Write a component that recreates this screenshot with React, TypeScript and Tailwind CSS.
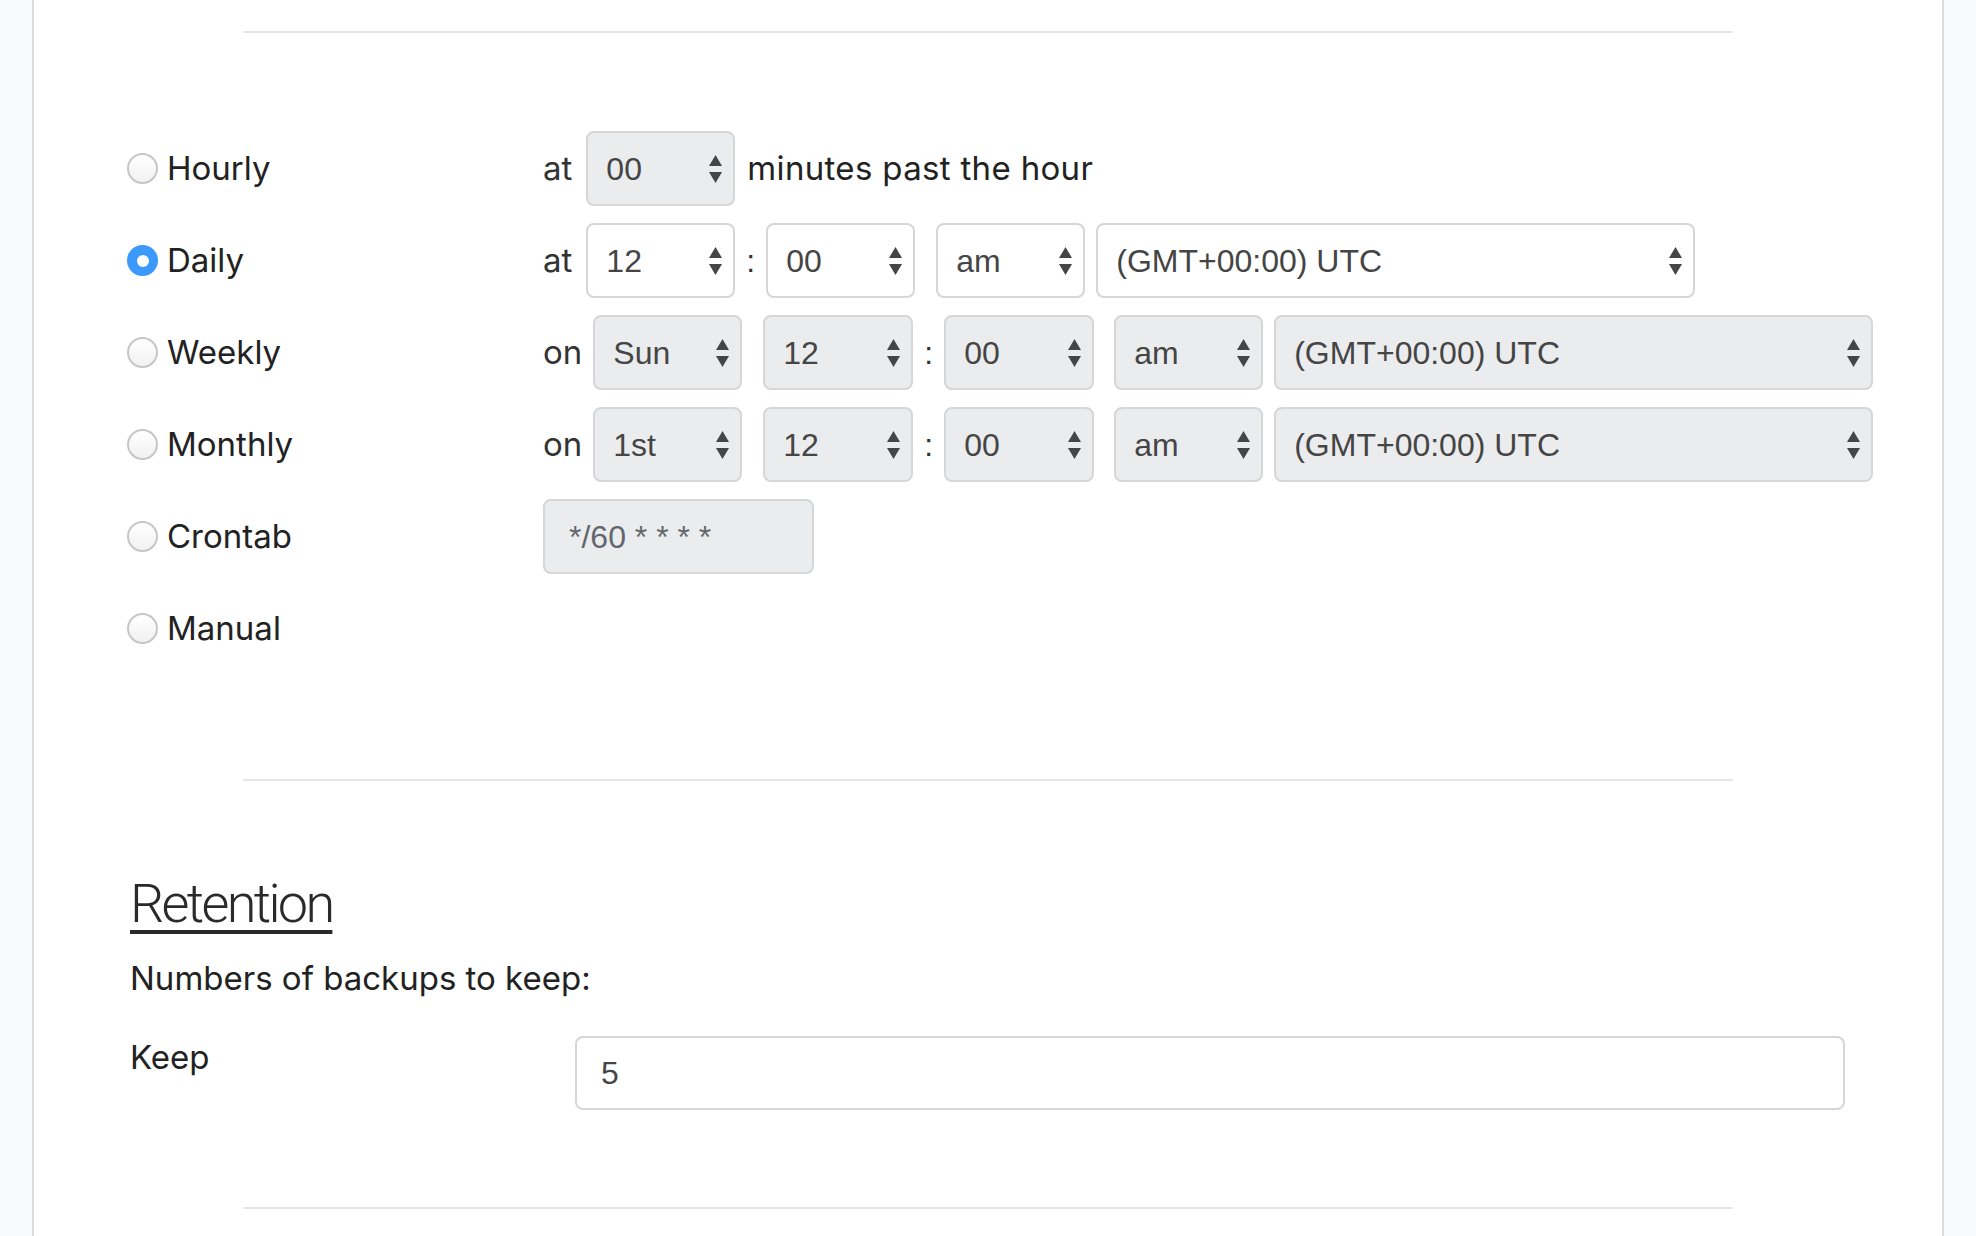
import React from "react";

const Arrow = () => (
  <svg width="13" height="28" viewBox="0 0 13 28" className="shrink-0">
    <polygon points="6.5,0 13,11 0,11" fill="#454545" />
    <polygon points="0,17 13,17 6.5,28" fill="#454545" />
  </svg>
);

type SelProps = { value: string; w: string; disabled?: boolean; className?: string };

const Sel = ({ value, w, disabled, className = "" }: SelProps) => (
  <div
    className={`${w} ${className} h-[75px] shrink-0 flex items-center justify-between pl-[18px] pr-[11px] rounded-[8px] border-2 border-[#d6d6d6] ${
      disabled ? "bg-[#ebecee]" : "bg-white"
    } font-['Liberation_Sans',Arial,sans-serif] text-[32px] text-[#454545]`}
  >
    <span>{value}</span>
    <Arrow />
  </div>
);

const Colon = () => (
  <span className="mx-[11px] font-['Liberation_Sans',Arial,sans-serif] text-[32px] text-[#333]">:</span>
);

const Radio = ({ checked }: { checked?: boolean }) =>
  checked ? (
    <div className="w-[31px] h-[31px] rounded-full bg-[#3b99fc] flex items-center justify-center shrink-0">
      <div className="w-[12px] h-[12px] rounded-full bg-white" />
    </div>
  ) : (
    <div className="w-[31px] h-[31px] rounded-full border-2 border-[#c6c6c6] bg-linear-to-b from-white to-[#f1f1f1] shrink-0" />
  );

const Row = ({
  label,
  checked,
  children,
}: {
  label: string;
  checked?: boolean;
  children?: React.ReactNode;
}) => (
  <div className="flex items-center h-[75px]">
    <div className="w-[416px] flex items-center gap-[9px] shrink-0">
      <Radio checked={checked} />
      <span className="text-[#222]">{label}</span>
    </div>
    <div className="flex items-center">{children}</div>
  </div>
);

const Hr = () => <div className="mx-auto w-[1490px] h-[2px] bg-[#e6e6e6]" />;

export default function App() {
  return (
    <div className="w-[1976px] h-[1236px] overflow-hidden bg-[#f8f9fb]">
      <div className="ml-[32px] w-[1912px] h-[1236px] border-x-2 border-[#dcdcdc] bg-white font-['Inter',sans-serif] text-[33px] text-[#222]">
        <div className="pt-[31px]">
          <Hr />
        </div>

        <div className="pl-[93px] pt-[98px] flex flex-col gap-[17px]">
          <Row label="Hourly">
            <span className="text-[#333]">at</span>
            <Sel value="00" w="w-[149px]" disabled className="ml-[14px]" />
            <span className="ml-[12px] text-[#222] tracking-[0.01em]">minutes past the hour</span>
          </Row>
          <Row label="Daily" checked>
            <span className="text-[#333]">at</span>
            <Sel value="12" w="w-[149px]" className="ml-[14px]" />
            <Colon />
            <Sel value="00" w="w-[149px]" />
            <Sel value="am" w="w-[149px]" className="ml-[21px]" />
            <Sel value="(GMT+00:00) UTC" w="w-[599px]" className="ml-[11px]" />
          </Row>
          <Row label="Weekly">
            <span className="text-[#333]">on</span>
            <Sel value="Sun" w="w-[149px]" disabled className="ml-[11px]" />
            <Sel value="12" w="w-[150px]" disabled className="ml-[21px]" />
            <Colon />
            <Sel value="00" w="w-[150px]" disabled />
            <Sel value="am" w="w-[149px]" disabled className="ml-[20px]" />
            <Sel value="(GMT+00:00) UTC" w="w-[599px]" disabled className="ml-[11px]" />
          </Row>
          <Row label="Monthly">
            <span className="text-[#333]">on</span>
            <Sel value="1st" w="w-[149px]" disabled className="ml-[11px]" />
            <Sel value="12" w="w-[150px]" disabled className="ml-[21px]" />
            <Colon />
            <Sel value="00" w="w-[150px]" disabled />
            <Sel value="am" w="w-[149px]" disabled className="ml-[20px]" />
            <Sel value="(GMT+00:00) UTC" w="w-[599px]" disabled className="ml-[11px]" />
          </Row>
          <Row label="Crontab">
            <div className="w-[271px] h-[75px] flex items-center pl-[24px] rounded-[8px] border-2 border-[#d6d6d6] bg-[#ebecee] font-['Liberation_Sans',Arial,sans-serif] text-[32px] text-[#62676d]">
              */60 * * * *
            </div>
          </Row>
          <Row label="Manual" />
        </div>

        <div className="pt-[113px]">
          <Hr />
        </div>

        <div className="pl-[96px] pt-[96px]">
          <h2 className="font-['Roboto',sans-serif] font-light text-[54px] leading-[54px] text-[#2a2a2a] underline decoration-[4px] underline-offset-[8px] tracking-[-0.05em]">
            Retention
          </h2>
          <p className="mt-[27px] leading-[40px] text-[#222]">Numbers of backups to keep:</p>
          <div className="mt-[38px] flex items-start">
            <span className="w-[445px] shrink-0 leading-[42px] text-[#222]">Keep</span>
            <div className="w-[1270px] h-[74px] flex items-center pl-[24px] rounded-[8px] border-2 border-[#d6d6d6] bg-white font-['Liberation_Sans',Arial,sans-serif] text-[32px] text-[#454545]">
              5
            </div>
          </div>
        </div>

        <div className="pt-[97px]">
          <Hr />
        </div>
      </div>
    </div>
  );
}
